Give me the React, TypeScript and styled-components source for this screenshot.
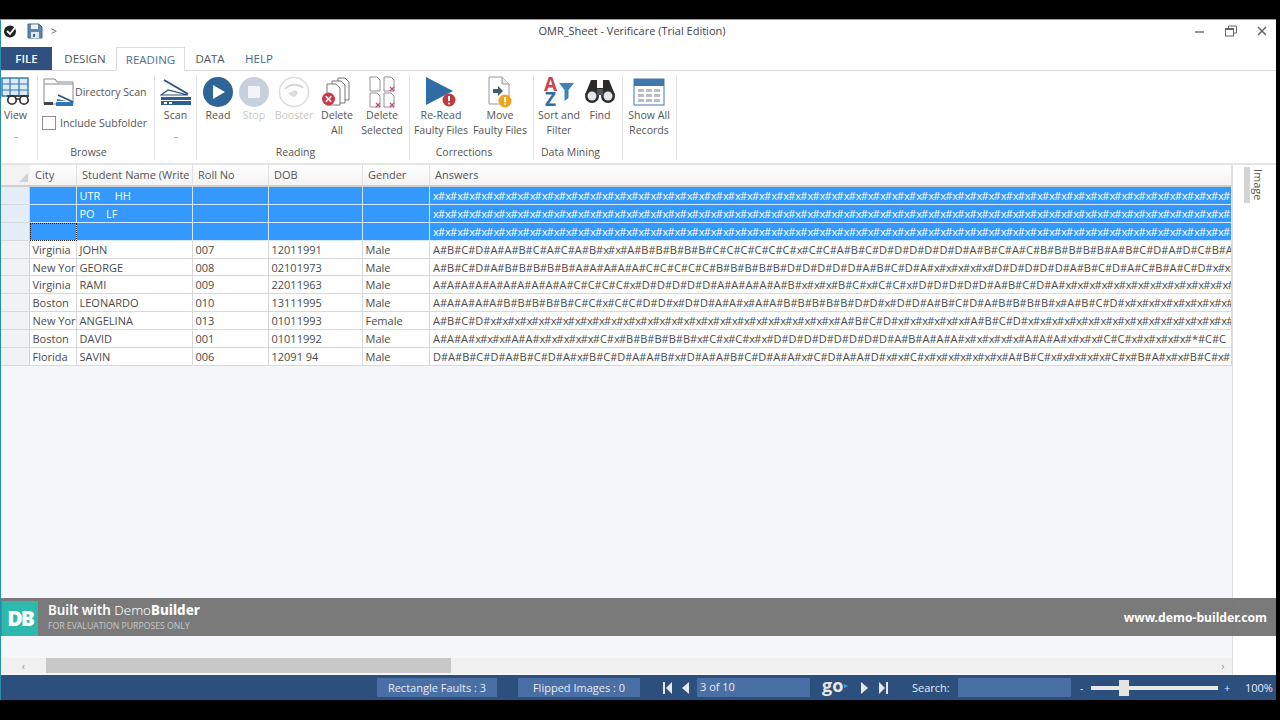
import React from 'react';
import styled, { createGlobalStyle } from 'styled-components';

const GlobalStyle = createGlobalStyle`
  html, body { margin: 0; padding: 0; background: #000; }
  body { font-family: 'Open Sans', 'Liberation Sans', sans-serif; overflow: hidden; }
`;

const Screen = styled.div`
  width: 1280px;
  height: 720px;
  background: #000;
  padding: 19px 4px 20px 0;
  box-sizing: border-box;
`;

const Win = styled.div`
  position: relative;
  height: 681px;
  display: flex;
  flex-direction: column;
  background: #fff;
  border-left: 1px solid #2a8fa8;
  border-top: 1px solid #5fb4c8;
  box-sizing: border-box;
`;

const TitleBar = styled.div`
  height: 27px;
  display: flex;
  align-items: center;
  position: relative;
  padding: 0 0 6px 2px;
  box-sizing: border-box;
  flex: none;
`;

const Title = styled.div`
  position: absolute;
  left: 0;
  width: 1262px;
  text-align: center;
  font-size: 11px;
  color: #444;
`;

const Quick = styled.div`
  display: flex;
  align-items: center;
  gap: 8px;
  font-size: 10px;
  color: #555;
`;

const WinButtons = styled.div`
  margin-left: auto;
  display: flex;
  align-items: center;
  gap: 19px;
  padding-right: 8px;
`;

const TabRow = styled.div`
  height: 24px;
  display: flex;
  align-items: stretch;
  flex: none;
  border-bottom: 1px solid #dcdcdc;
  box-sizing: border-box;
`;

const FileTab = styled.div`
  width: 51px;
  background: #2f5080;
  color: #fff;
  font-size: 11.5px;
  font-weight: 600;
  display: flex;
  align-items: center;
  justify-content: center;
`;

const Tab = styled.div<{ $active?: boolean; $w: number; $ml: number; $blue?: boolean }>`
  width: ${p => p.$w}px;
  margin-left: ${p => p.$ml}px;
  font-size: 11.5px;
  color: ${p => (p.$active ? '#4f6f8f' : p.$blue ? '#44688c' : '#555')};
  display: flex;
  align-items: center;
  justify-content: center;
  box-sizing: border-box;
  ${p => p.$active && `
    background: #fff;
    border: 1px solid #dcdcdc;
    border-bottom: 1px solid #fff;
    height: 24px;
  `}
`;

const Ribbon = styled.div`
  height: 94px;
  flex: none;
  display: flex;
  padding-top: 4px;
  box-sizing: border-box;
  background: #fff;
  border-bottom: 2px solid #e4e4e4;
`;

const Group = styled.div<{ $w: number }>`
  width: ${p => p.$w}px;
  flex: none;
  box-sizing: border-box;
  border-right: 1px solid #e4e4e4;
  display: flex;
  flex-direction: column;
  margin-bottom: 3px;
`;

const GroupBody = styled.div<{ $pl?: number }>`
  flex: 1;
  display: flex;
  min-height: 0;
  padding-left: ${p => p.$pl || 0}px;
`;

const GroupLabel = styled.div`
  height: 15px;
  line-height: 14px;
  padding-right: 15px;
  font-size: 10.5px;
  color: #555;
  text-align: center;
  white-space: nowrap;
`;

const RibbonBtn = styled.div<{ $w: number; $off?: boolean }>`
  width: ${p => p.$w}px;
  flex: none;
  display: flex;
  flex-direction: column;
  align-items: center;
  font-size: 10.6px;
  line-height: 15px;
  color: ${p => (p.$off ? '#c9c9c9' : '#555')};
  white-space: nowrap;
  text-align: center;
`;

const IconBox = styled.div`
  height: 34px;
  display: flex;
  align-items: center;
  justify-content: center;
  margin-bottom: -1px;
`;

const Caret = styled.div`
  width: 4px;
  height: 1px;
  margin-top: 14px;
  background: #b5b5b5;
`;

const BrowseBody = styled.div`
  display: flex;
  flex-direction: column;
  padding-left: 5px;
  gap: 7px;
`;

const DirRow = styled.div`
  display: flex;
  align-items: center;
  font-size: 10.6px;
  color: #555;
  height: 34px;
  white-space: nowrap;
`;

const CheckRow = styled.label`
  display: flex;
  align-items: center;
  gap: 4px;
  margin-left: -1px;
  font-size: 10.6px;
  color: #555;
  white-space: nowrap;
`;

const CheckBox = styled.span`
  width: 12px;
  height: 12px;
  border: 1px solid #8f8f8f;
  background: #fff;
  display: block;
`;

const SortLetters = styled.div`
  display: flex;
  flex-direction: column;
  font-size: 19px;
  font-weight: 700;
  line-height: 15px;
  width: 15px;
  color: #c8454f;
  span + span {
    color: #2f6ea5;
  }
`;

const Main = styled.div`
  flex: 1;
  display: flex;
  min-height: 0;
`;

const GridArea = styled.div`
  width: 1231px;
  flex: none;
  display: flex;
  flex-direction: column;
  background: #f5f6f9;
  border-right: 1px solid #dcdcdc;
`;

const GridBody = styled.div`
  flex: 1;
  min-height: 0;
`;

const Row = styled.div<{ $selected?: boolean; $head?: boolean }>`
  display: grid;
  grid-template-columns: 29px 47px 116px 76px 94px 67px 802px;
  height: ${p => (p.$head ? '22px' : '17.9px')};
  box-sizing: border-box;
  font-size: 11px;
  color: ${p => (p.$selected ? '#fff' : '#4a4a4a')};
`;

const RowHead = styled.div<{ $selected?: boolean }>`
  background: ${p => (p.$selected ? '#e3eef9' : '#f0f2f6')};
  border-bottom: 1px solid #d6d8dc;
  border-right: 1px solid #cfd3d8;
`;

const Corner = styled.div`
  background: #f3f3f3;
  border-bottom: 2px solid #cfcfcf;
  position: relative;
`;

const CornerMark = styled.div`
  position: absolute;
  right: 2px;
  bottom: 3px;
  width: 0;
  height: 0;
  border-left: 9px solid transparent;
  border-bottom: 9px solid #cfd3d8;
`;

const HeadCell = styled.div`
  background: linear-gradient(#fff, #f3f3f3);
  border-bottom: 2px solid #cfcfcf;
  border-right: 1px solid #e2e2e2;
  padding-left: 5px;
  line-height: 20px;
  overflow: hidden;
  white-space: nowrap;
  color: #555;
`;

const Cell = styled.div<{ $selected?: boolean; $focus?: boolean; $answers?: boolean }>`
  background: ${p => (p.$selected ? '#3399ff' : '#fff')};
  border-bottom: 1px solid ${p => (p.$selected ? '#d5e9fc' : '#d9d9d9')};
  border-right: 1px solid ${p => (p.$selected ? '#d5e9fc' : '#d9d9d9')};
  padding-left: ${p => (p.$answers ? '3px' : '2.5px')};
  line-height: 18px;
  overflow: hidden;
  white-space: pre;
  box-sizing: border-box;
  ${p => p.$focus && 'outline: 1px dotted #222; outline-offset: -1px;'}
`;

const NarrowX = styled.span`
  letter-spacing: -0.8px;
`;

const HBar = styled.div`
  height: 15px;
  flex: none;
  margin-bottom: 2px;
  display: flex;
  align-items: center;
  background: #f0f0f0;
  font-size: 11px;
  color: #999;
`;

const HArrow = styled.div<{ $w: number }>`
  width: ${p => p.$w}px;
  text-align: center;
  flex: none;
`;

const HThumb = styled.div`
  width: 405px;
  height: 15px;
  background: #c8c8c8;
  flex: none;
`;

const HFill = styled.div`
  flex: 1;
`;

const SidePanel = styled.div`
  flex: 1;
  position: relative;
  background: #fff;
`;

const SideTab = styled.div`
  position: absolute;
  top: 2px;
  left: 11px;
  width: 6px;
  height: 36px;
  background: #d4d4d4;
`;

const SideLabel = styled.div`
  position: absolute;
  top: 4px;
  left: 18px;
  writing-mode: vertical-rl;
  font-size: 11px;
  color: #555;
`;

const Banner = styled.div`
  position: absolute;
  left: 0;
  right: 0;
  top: 578px;
  height: 38px;
  background: rgba(112, 112, 112, 0.93);
  display: flex;
  align-items: center;
  color: #fff;
`;

const BannerLogo = styled.div`
  width: 36px;
  height: 35px;
  margin: 2px 0 0 1px;
  background: #2fb8ac;
  display: flex;
  align-items: center;
  justify-content: center;
  font-size: 21px;
  font-weight: 800;
  letter-spacing: -2px;
  flex: none;
`;

const BannerText = styled.div`
  margin-left: 10px;
  display: flex;
  flex-direction: column;
`;

const BannerTitle = styled.div`
  font-family: 'Noto Sans', sans-serif;
  font-size: 13.4px;
  line-height: 17px;
  font-weight: 600;
  b { font-weight: 800; }
  span { font-weight: 300; }
`;

const BannerSub = styled.div`
  font-size: 8.7px;
  line-height: 11px;
  margin-top: 2px;
  color: #c6c6c6;
`;

const BannerUrl = styled.div`
  margin-left: auto;
  padding-right: 9px;
  font-family: 'Noto Sans', sans-serif;
  font-size: 12.2px;
  font-weight: 700;
`;

const StatusBar = styled.div`
  height: 25px;
  flex: none;
  background: #2c4f7e;
  display: flex;
  align-items: center;
  color: #e6edf6;
  font-size: 11px;
  white-space: nowrap;
`;

const StatusBox = styled.div<{ $w: number; $ml: number }>`
  width: ${p => p.$w}px;
  margin-left: ${p => p.$ml}px;
  height: 19px;
  background: #4a6fa5;
  display: flex;
  align-items: center;
  justify-content: center;
  flex: none;
`;

const PageInput = styled.div`
  width: 113px;
  height: 19px;
  margin-left: 7px;
  background: #4a6fa5;
  padding-left: 3px;
  line-height: 18px;
  box-sizing: border-box;
  flex: none;
`;

const SearchInput = styled.div`
  width: 113px;
  height: 19px;
  margin-left: 10px;
  background: #4a6fa5;
  flex: none;
`;

const GoLabel = styled.div`
  margin-left: 12px;
  width: 30px;
  font-size: 18px;
  font-weight: 700;
  line-height: 18px;
  margin-top: -5px;
  color: #e8e8e8;
  display: flex;
  align-items: center;
  span {
    font-size: 8px;
    color: #2f9be0;
    margin-left: 1px;
  }
`;

const NavIcons = styled.div<{ $ml: number; $gap: number }>`
  display: flex;
  align-items: center;
  gap: ${p => p.$gap}px;
  margin-left: ${p => p.$ml}px;
  flex: none;
`;

const SearchLabel = styled.div`
  margin-left: 24px;
  width: 36px;
  flex: none;
`;

const ZoomSign = styled.div<{ $ml: number }>`
  margin-left: ${p => p.$ml}px;
  font-size: 10px;
  flex: none;
`;

const Slider = styled.div`
  position: relative;
  width: 127px;
  height: 4px;
  margin-left: 8px;
  background: #e8e8e8;
  flex: none;
`;

const SliderThumb = styled.div`
  position: absolute;
  left: 28px;
  top: -6px;
  width: 10px;
  height: 16px;
  background: #e4e4e4;
`;

const ZoomPct = styled.div`
  margin-left: 15px;
  font-size: 11px;
`;

const Svg = ({ w, h, children }: { w: number; h: number; children: React.ReactNode }) => (
  <svg width={w} height={h} viewBox={`0 0 ${w} ${h}`}>{children}</svg>
);

const ViewIcon = () => (
  <Svg w={32} h={30}>
    <rect x="2" y="1" width="26" height="18" fill="#dcebf7" stroke="#2f74b5" strokeWidth="1.4" />
    <path d="M2 7h26M2 13h26M10 1v18M19 1v18" stroke="#2f74b5" strokeWidth="1.2" />
    <circle cx="12" cy="23" r="4.2" fill="#fff" stroke="#333" strokeWidth="1.7" />
    <circle cx="24" cy="23" r="4.2" fill="#fff" stroke="#333" strokeWidth="1.7" />
    <path d="M7 19h22M16 22h4" stroke="#333" strokeWidth="1.5" />
  </Svg>
);

const FolderIcon = () => (
  <Svg w={32} h={30}>
    <path d="M1 27V2h11l2 3h16v22z" fill="#fff" stroke="#888" strokeWidth="1" />
    <path d="M1 7h29" stroke="#888" />
    <path d="M1 25h9v3H1z" fill="#444" />
    <path d="M15 18l15 7" stroke="#2c4f7e" strokeWidth="1.5" />
    <path d="M14 22l9 2H14z" fill="#2f74b5" />
    <rect x="13" y="25" width="17" height="4" fill="#2f74b5" />
  </Svg>
);

const ScanIcon = () => (
  <Svg w={32} h={28}>
    <path d="M4 2l24 14" stroke="#2c4f7e" strokeWidth="1.8" />
    <path d="M1 17l7-5 20 5z" fill="#fff" stroke="#2c4f7e" strokeWidth="1.2" />
    <rect x="1" y="19" width="30" height="3" fill="#2f5e92" />
    <rect x="1" y="23" width="30" height="4" fill="#2f5e92" />
    <path d="M4 24h3v2H4zM9 24h3v2H9z" fill="#fff" />
  </Svg>
);

const ReadIcon = () => (
  <Svg w={32} h={32}>
    <circle cx="16" cy="16" r="15" fill="#2f6496" />
    <path d="M11 9l12 7-12 7z" fill="#fff" />
  </Svg>
);

const StopIcon = () => (
  <Svg w={32} h={32}>
    <circle cx="16" cy="16" r="15" fill="#c7d1de" />
    <rect x="10" y="10" width="12" height="12" rx="1" fill="#f2f4f7" />
  </Svg>
);

const BoosterIcon = () => (
  <Svg w={32} h={32}>
    <circle cx="16" cy="16" r="14.5" fill="#fff" stroke="#dcdcdc" strokeWidth="1.5" />
    <path d="M7 13c4-5 13-6 18-1" fill="none" stroke="#d6d6d6" strokeWidth="2" />
    <path d="M10 17l8-3 2 3-3 4c-3 0-5-2-7-4z" fill="#d9dee4" />
  </Svg>
);

const RedX = ({ cx, cy, r }: { cx: number; cy: number; r: number }) => (
  <>
    <circle cx={cx} cy={cy} r={r} fill="#c83a46" />
    <path d={`M${cx - r / 2.4} ${cy - r / 2.4}l${r / 1.2} ${r / 1.2}m0 ${-r / 1.2}l${-r / 1.2} ${r / 1.2}`} stroke="#fff" strokeWidth="1.6" />
  </>
);

const DeleteAllIcon = () => (
  <Svg w={32} h={32}>
    <path d="M17 2h7l4 4v18h-11z" fill="#fff" stroke="#777" />
    <path d="M11 5h9l4 4v18H11z" fill="#fff" stroke="#777" />
    <path d="M6 8h9l4 4v17H6z" fill="#fff" stroke="#777" />
    <RedX cx={7.5} cy={23} r={6.5} />
  </Svg>
);

const SmallDoc = ({ x, y, mark }: { x: number; y: number; mark?: boolean }) => (
  <>
    <path d={`M${x} ${y}h7l3 3v11h-10z`} fill="#fff" stroke="#888" strokeWidth="0.9" />
    {mark && <path d={`M${x + 6} ${y + 10}l4 4m0-4l-4 4`} stroke="#c0506a" strokeWidth="1.2" />}
  </>
);

const DeleteSelIcon = () => (
  <Svg w={28} h={32}>
    <SmallDoc x={2} y={1} />
    <SmallDoc x={16} y={1} mark />
    <SmallDoc x={2} y={17} mark />
    <SmallDoc x={16} y={17} mark />
  </Svg>
);

const ReReadIcon = () => (
  <Svg w={32} h={32}>
    <path d="M1 1l27 14L1 29z" fill="#2f6ea5" />
    <circle cx="24" cy="24" r="6.5" fill="#c03a40" />
    <path d="M24 20v5" stroke="#fff" strokeWidth="2" />
    <circle cx="24" cy="27.5" r="1" fill="#fff" />
  </Svg>
);

const MoveIcon = () => (
  <Svg w={28} h={32}>
    <path d="M3 1h13l7 7v20H3z" fill="#fff" stroke="#999" />
    <path d="M16 1v7h7" fill="#e8e8e8" stroke="#999" />
    <path d="M7 13h5v-3l5 5-5 5v-3H7z" fill="#3f5f6f" />
    <circle cx="19" cy="25" r="6.5" fill="#f0a41c" />
    <path d="M19 21v5" stroke="#fff" strokeWidth="2" />
    <circle cx="19" cy="28.2" r="1" fill="#fff" />
  </Svg>
);

const FunnelIcon = () => (
  <Svg w={17} h={22}>
    <path d="M1 2h15l-5.5 7v8l-4 3V9z" fill="#3f83b8" />
  </Svg>
);

const FindIcon = () => (
  <Svg w={32} h={28}>
    <path d="M7 2h6v8h6V2h6l6 15H1z" fill="#2b2b2b" />
    <circle cx="8" cy="18" r="7" fill="#2b2b2b" />
    <circle cx="24" cy="18" r="7" fill="#2b2b2b" />
    <circle cx="8" cy="18" r="4.5" fill="#dfe6ec" />
    <circle cx="24" cy="18" r="4.5" fill="#dfe6ec" />
    <rect x="13" y="11" width="6" height="6" fill="#555" />
  </Svg>
);

const ShowAllIcon = () => (
  <Svg w={32} h={28}>
    <rect x="1" y="1" width="30" height="26" fill="#fff" stroke="#4a7aa8" />
    <rect x="1" y="1" width="30" height="7" fill="#3f78ad" />
    <path d="M5 11h6v3H5zM13 11h6v3h-6zM21 11h6v3h-6zM5 16h6v3H5zM13 16h6v3h-6zM21 16h6v3h-6zM5 21h6v3H5zM13 21h6v3h-6zM21 21h6v3h-6z" fill="#b9bec4" />
  </Svg>
);

const CheckIcon = () => (
  <Svg w={16} h={14}>
    <circle cx="7" cy="7.5" r="6" fill="#222" />
    <path d="M4 7l3 3 7-9" fill="none" stroke="#fff" strokeWidth="1.8" />
  </Svg>
);

const SaveIcon = () => (
  <Svg w={16} h={16}>
    <path d="M1 1h11l3 3v11H1z" fill="#5f86ad" stroke="#3f6890" />
    <rect x="4" y="1.5" width="7" height="4.5" fill="#eef3f8" />
    <rect x="4" y="9" width="8" height="6" fill="#dfe7ef" />
    <rect x="6" y="11" width="2" height="3" fill="#3f6890" />
  </Svg>
);

const MinIcon = () => (
  <Svg w={12} h={12}>
    <path d="M1 7h9" stroke="#666" strokeWidth="1.4" />
  </Svg>
);

const RestoreIcon = () => (
  <Svg w={12} h={12}>
    <path d="M3.5 3V1h8v7H9" fill="none" stroke="#666" />
    <rect x="0.5" y="3.5" width="8" height="7.5" fill="#fff" stroke="#666" />
    <path d="M0.5 4.5h8" stroke="#666" />
  </Svg>
);

const CloseIcon = () => (
  <Svg w={12} h={12}>
    <path d="M2 2l8 8M10 2l-8 8" stroke="#666" strokeWidth="1.6" />
  </Svg>
);

const NavIcon = ({ dir, bar }: { dir: 'l' | 'r'; bar?: boolean }) => (
  <Svg w={10} h={14}>
    {dir === 'l' ? <path d={bar ? 'M9 1v12L3 7z' : 'M9 1v12L2 7z'} fill="#e8e8e8" /> : <path d={bar ? 'M1 1v12l6-6z' : 'M1 1v12l7-6z'} fill="#e8e8e8" />}
    {bar && <rect x={dir === 'l' ? 0 : 8} y="1" width="2" height="12" fill="#e8e8e8" />}
  </Svg>
);

// the x marks run narrower than the letters in this grid font
const Answers = ({ text }: { text: string }) => (
  <>
    {text.split(/(x)/).map((part, i) => (part === 'x' ? <NarrowX key={i}>x</NarrowX> : part))}
  </>
);

const xs = 'x#'.repeat(67);

const rows = [
  { city: '', name: 'UTR     HH', roll: '', dob: '', gender: '', answers: xs, selected: true },
  { city: '', name: 'PO    LF', roll: '', dob: '', gender: '', answers: xs, selected: true },
  { city: '', name: '', roll: '', dob: '', gender: '', answers: xs, selected: true, focus: true },
  { city: 'Virginia', name: 'JOHN', roll: '007', dob: '12011991', gender: 'Male', answers: 'A#B#C#D#A#A#B#C#A#C#A#B#x#x#A#B#B#B#B#B#C#C#C#C#C#C#x#C#C#A#B#C#D#D#D#D#D#D#A#B#C#A#C#B#B#B#B#B#A#B#C#D#A#D#C#B#A' },
  { city: 'New York', name: 'GEORGE', roll: '008', dob: '02101973', gender: 'Male', answers: 'A#B#C#D#A#B#B#B#B#B#A#A#A#A#A#C#C#C#C#C#B#B#B#B#B#D#D#D#D#D#A#B#C#D#A#x#x#x#x#x#D#D#D#D#D#A#B#C#D#A#C#B#A#C#D#x#x#x#x#x#' },
  { city: 'Virginia', name: 'RAMI', roll: '009', dob: '22011963', gender: 'Male', answers: 'A#A#A#A#A#A#A#A#A#A#C#C#C#C#x#D#D#D#D#D#A#A#A#A#A#B#x#x#x#B#C#x#C#C#x#D#D#D#D#D#A#B#C#D#A#x#x#x#x#x#x#x#x#x#x#x#x#x#x#x#x#' },
  { city: 'Boston', name: 'LEONARDO', roll: '010', dob: '13111995', gender: 'Male', answers: 'A#A#A#A#A#B#B#B#B#B#C#C#x#C#C#D#D#x#D#D#A#A#x#A#A#B#B#B#B#B#D#D#x#D#D#A#B#C#D#A#B#B#B#B#x#A#B#C#D#x#x#x#x#x#x#x#x#x#x#x#' },
  { city: 'New York', name: 'ANGELINA', roll: '013', dob: '01011993', gender: 'Female', answers: 'A#B#C#D#x#x#x#x#x#x#x#x#x#x#x#x#x#x#x#x#x#x#x#x#x#x#x#x#x#x#x#x#x#A#B#C#D#x#x#x#x#x#x#A#B#C#D#x#x#x#x#x#x#x#x#x#x#x#x#x#x#x#x#x#x#x#' },
  { city: 'Boston', name: 'DAVID', roll: '001', dob: '01011992', gender: 'Male', answers: 'A#A#A#x#x#x#A#A#x#x#x#x#x#C#x#B#B#B#B#B#x#C#x#C#x#x#D#D#D#D#D#D#D#D#A#B#A#A#A#x#x#x#x#x#A#A#A#x#x#x#C#C#x#x#x#x#x#*#C#C' },
  { city: 'Florida', name: 'SAVIN', roll: '006', dob: '12091 94', gender: 'Male', answers: 'D#A#B#C#D#A#B#C#D#A#x#B#C#D#A#A#B#x#D#A#A#B#C#D#A#A#x#C#D#A#A#D#x#x#C#x#x#x#x#x#x#x#A#B#C#x#x#x#x#x#C#x#B#A#x#x#B#C#x#D#A' },
];

export default function App() {
  return (
    <Screen>
      <GlobalStyle />
      <Win>
        <TitleBar>
          <Title>OMR_Sheet - Verificare (Trial Edition)</Title>
          <Quick>
            <CheckIcon />
            <SaveIcon />
            <span>&gt;</span>
          </Quick>
          <WinButtons>
            <MinIcon />
            <RestoreIcon />
            <CloseIcon />
          </WinButtons>
        </TitleBar>
        <TabRow>
          <FileTab>FILE</FileTab>
          <Tab $w={54} $ml={6}>DESIGN</Tab>
          <Tab $w={69} $ml={4} $active>READING</Tab>
          <Tab $w={42} $ml={4}>DATA</Tab>
          <Tab $w={38} $ml={9} $blue>HELP</Tab>
        </TabRow>
        <Ribbon>
          <Group $w={37}>
            <GroupBody>
              <RibbonBtn $w={29}>
                <IconBox><ViewIcon /></IconBox>
                View
                <Caret />
              </RibbonBtn>
            </GroupBody>
          </Group>
          <Group $w={117}>
            <GroupBody>
              <BrowseBody>
                <DirRow><FolderIcon />Directory Scan</DirRow>
                <CheckRow><CheckBox />Include Subfolder</CheckRow>
              </BrowseBody>
            </GroupBody>
            <GroupLabel>Browse</GroupLabel>
          </Group>
          <Group $w={42}>
            <GroupBody>
              <RibbonBtn $w={41}>
                <IconBox><ScanIcon /></IconBox>
                Scan
                <Caret />
              </RibbonBtn>
            </GroupBody>
          </Group>
          <Group $w={213}>
            <GroupBody $pl={1}>
              <RibbonBtn $w={40}>
                <IconBox><ReadIcon /></IconBox>
                Read
              </RibbonBtn>
              <RibbonBtn $w={32} $off>
                <IconBox><StopIcon /></IconBox>
                Stop
              </RibbonBtn>
              <RibbonBtn $w={48} $off>
                <IconBox><BoosterIcon /></IconBox>
                Booster
              </RibbonBtn>
              <RibbonBtn $w={38}>
                <IconBox><DeleteAllIcon /></IconBox>
                Delete<br />All
              </RibbonBtn>
              <RibbonBtn $w={52}>
                <IconBox><DeleteSelIcon /></IconBox>
                Delete<br />Selected
              </RibbonBtn>
            </GroupBody>
            <GroupLabel>Reading</GroupLabel>
          </Group>
          <Group $w={124}>
            <GroupBody>
              <RibbonBtn $w={62}>
                <IconBox><ReReadIcon /></IconBox>
                Re-Read<br />Faulty Files
              </RibbonBtn>
              <RibbonBtn $w={56}>
                <IconBox><MoveIcon /></IconBox>
                Move<br />Faulty Files
              </RibbonBtn>
            </GroupBody>
            <GroupLabel>Corrections</GroupLabel>
          </Group>
          <Group $w={89}>
            <GroupBody>
              <RibbonBtn $w={50}>
                <IconBox>
                  <SortLetters><span>A</span><span>Z</span></SortLetters>
                  <FunnelIcon />
                </IconBox>
                Sort and<br />Filter
              </RibbonBtn>
              <RibbonBtn $w={32}>
                <IconBox><FindIcon /></IconBox>
                Find
              </RibbonBtn>
            </GroupBody>
            <GroupLabel>Data Mining</GroupLabel>
          </Group>
          <Group $w={54}>
            <GroupBody>
              <RibbonBtn $w={52}>
                <IconBox><ShowAllIcon /></IconBox>
                Show All<br />Records
              </RibbonBtn>
            </GroupBody>
          </Group>
        </Ribbon>
        <Main>
          <GridArea>
            <GridBody>
              <Row $head>
                <Corner><CornerMark /></Corner>
                <HeadCell>City</HeadCell>
                <HeadCell>Student Name (Write</HeadCell>
                <HeadCell>Roll No</HeadCell>
                <HeadCell>DOB</HeadCell>
                <HeadCell>Gender</HeadCell>
                <HeadCell>Answers</HeadCell>
              </Row>
              {rows.map((r, i) => (
                <Row key={i} $selected={r.selected}>
                  <RowHead $selected={r.selected} />
                  <Cell $selected={r.selected} $focus={r.focus}>{r.city}</Cell>
                  <Cell $selected={r.selected}>{r.name}</Cell>
                  <Cell $selected={r.selected}>{r.roll}</Cell>
                  <Cell $selected={r.selected}>{r.dob}</Cell>
                  <Cell $selected={r.selected}>{r.gender}</Cell>
                  <Cell $selected={r.selected} $answers><Answers text={r.answers} /></Cell>
                </Row>
              ))}
            </GridBody>
            <HBar>
              <HArrow $w={45}>‹</HArrow>
              <HThumb />
              <HFill />
              <HArrow $w={18}>›</HArrow>
            </HBar>
          </GridArea>
          <SidePanel>
            <SideTab />
            <SideLabel>Image</SideLabel>
          </SidePanel>
        </Main>
        <Banner>
          <BannerLogo>DB</BannerLogo>
          <BannerText>
            <BannerTitle>Built with <span>Demo</span><b>Builder</b></BannerTitle>
            <BannerSub>FOR EVALUATION PURPOSES ONLY</BannerSub>
          </BannerText>
          <BannerUrl>www.demo-builder.com</BannerUrl>
        </Banner>
        <StatusBar>
          <StatusBox $w={120} $ml={376}>Rectangle Faults : 3</StatusBox>
          <StatusBox $w={122} $ml={21}>Flipped Images : 0</StatusBox>
          <NavIcons $ml={23} $gap={7}>
            <NavIcon dir="l" bar />
            <NavIcon dir="l" />
          </NavIcons>
          <PageInput>3 of 10</PageInput>
          <GoLabel>go<span>▸</span></GoLabel>
          <NavIcons $ml={8} $gap={8}>
            <NavIcon dir="r" />
            <NavIcon dir="r" bar />
          </NavIcons>
          <SearchLabel>Search:</SearchLabel>
          <SearchInput />
          <ZoomSign $ml={9}>-</ZoomSign>
          <Slider><SliderThumb /></Slider>
          <ZoomSign $ml={6}>+</ZoomSign>
          <ZoomPct>100%</ZoomPct>
        </StatusBar>
      </Win>
    </Screen>
  );
}
